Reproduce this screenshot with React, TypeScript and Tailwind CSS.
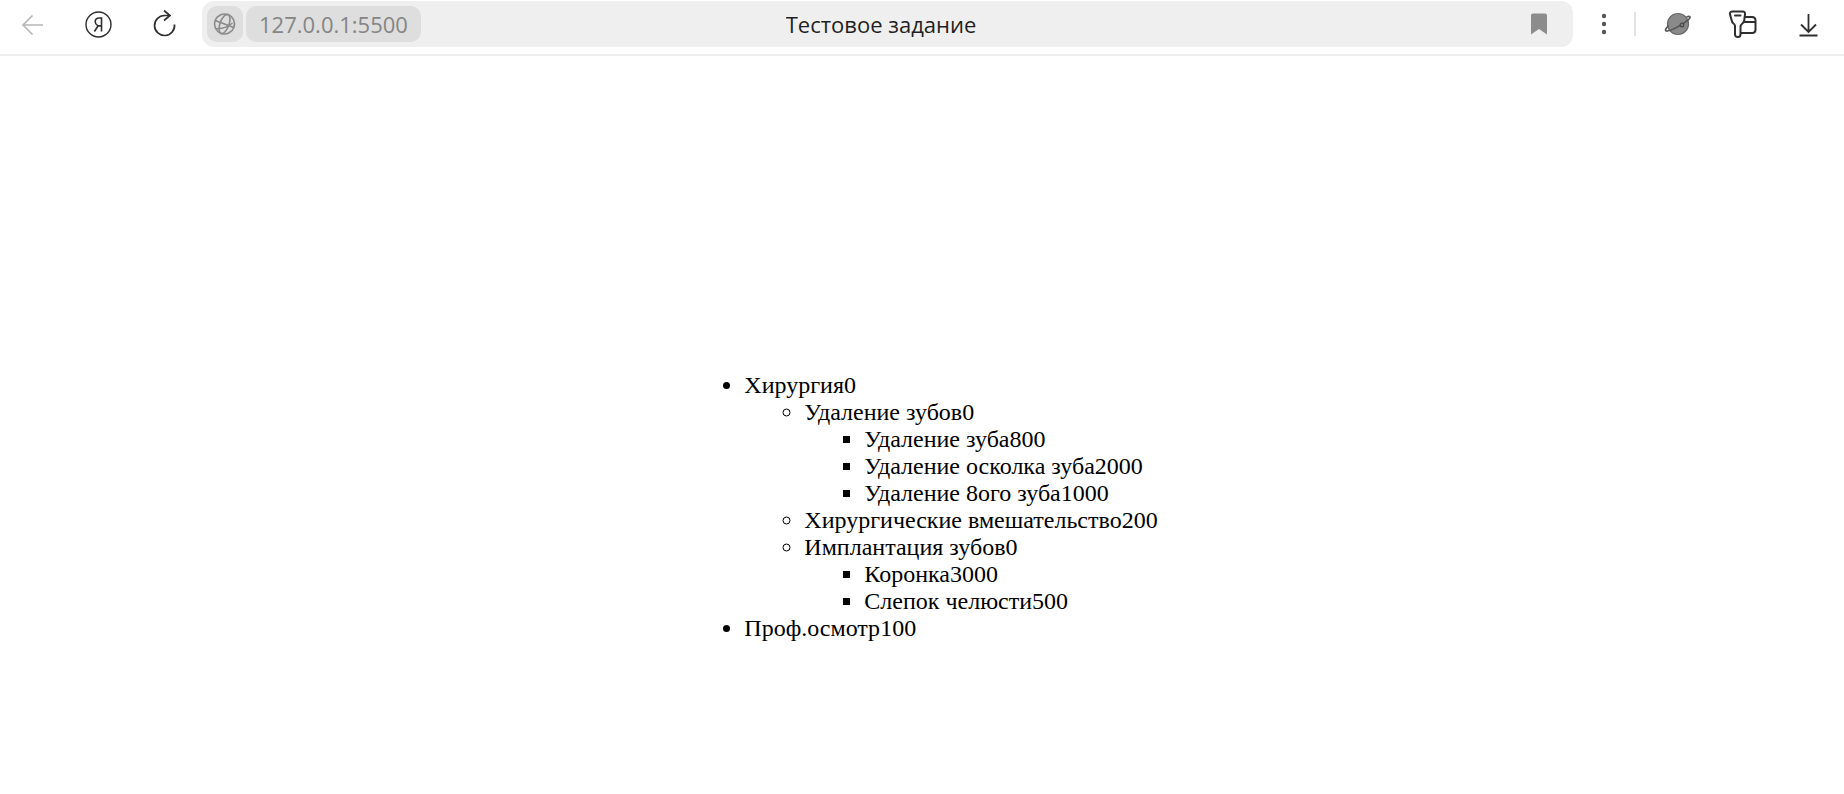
import type { ReactNode } from 'react';

type Service = { name: string; price: number; children?: Service[] };

const services: Service[] = [
  {
    name: 'Хирургия',
    price: 0,
    children: [
      {
        name: 'Удаление зубов',
        price: 0,
        children: [
          { name: 'Удаление зуба', price: 800 },
          { name: 'Удаление осколка зуба', price: 2000 },
          { name: 'Удаление 8ого зуба', price: 1000 },
        ],
      },
      { name: 'Хирургические вмешательство', price: 200 },
      {
        name: 'Имплантация зубов',
        price: 0,
        children: [
          { name: 'Коронка', price: 3000 },
          { name: 'Слепок челюсти', price: 500 },
        ],
      },
    ],
  },
  { name: 'Проф.осмотр', price: 100 },
];

const markers = ['list-disc', 'list-[circle]', 'list-[square]'];

function ServiceList({ items, level = 0 }: { items: Service[]; level?: number }) {
  return (
    <ul className={`pl-[60px] ${markers[level]}`}>
      {items.map((item) => (
        <li key={item.name}>
          {item.name}
          {item.price}
          {item.children && <ServiceList items={item.children} level={level + 1} />}
        </li>
      ))}
    </ul>
  );
}

function IconButton({ label, disabled, children }: { label: string; disabled?: boolean; children: ReactNode }) {
  return (
    <button
      type="button"
      aria-label={label}
      disabled={disabled}
      className="flex size-8 shrink-0 items-center justify-center text-[#2e2e2e] disabled:text-[#b5b5b5]"
    >
      {children}
    </button>
  );
}

const line = { fill: 'none', stroke: 'currentColor', strokeWidth: 2 } as const;

export default function App() {
  return (
    <div className="flex min-h-screen flex-col bg-white">
      <header className="flex h-14 items-start border-b-2 border-[#f0f0f0] pl-4 pr-5 pt-px font-['Open_Sans',sans-serif]">
        <nav className="flex h-[46px] items-center gap-[34px]">
          <IconButton label="Назад" disabled>
            <svg viewBox="0 0 32 32" className="size-8" {...line} strokeWidth={1.6}>
              <path d="M27 17H7M16.500 7.500 7 17l9.500 9.500" />
            </svg>
          </IconButton>
          <IconButton label="Яндекс">
            <svg viewBox="0 0 32 32" className="size-8" {...line} strokeWidth={1.4}>
              <circle cx="16.500" cy="16.500" r="12.500" />
              <path strokeWidth="1.600" d="M19.500 23.500V10h-2.300c-2.600 0-4 1.400-4 3.700 0 2 1 3.100 2.800 4.200l-3.600 5.600M16 17.900h3.500" />
            </svg>
          </IconButton>
          <IconButton label="Обновить">
            <svg viewBox="0 0 32 32" className="size-8" {...line}>
              <path d="M26.500 16.500A10 10 0 1 1 16.500 7.500H22M16 2.500l6 5-6 5" strokeWidth="1.700" />
            </svg>
          </IconButton>
        </nav>

        <div className="ml-[22px] flex h-[46px] min-w-0 flex-1 items-center gap-1 rounded-xl bg-[#efefef] pl-[5px] pr-[18px]">
          <div className="flex flex-1 items-center gap-[3px]">
            <button type="button" aria-label="Сведения о сайте" className="flex size-9 items-center justify-center rounded-[10px] bg-[#dedede] text-[#8a8a8a]">
              <svg viewBox="0 0 36 36" className="size-9" {...line} strokeWidth={1.6}>
                <g transform="rotate(20 17.500 18)">
                  <circle cx="17.500" cy="18" r="10" />
                  <ellipse cx="17.500" cy="18" rx="4.500" ry="10" />
                  <path d="M7.500 18h20" />
                </g>
                <path d="M9 22.500c6 .500 12-1.500 16.500-5.500" strokeWidth="1.300" />
              </svg>
            </button>
            <button type="button" className="flex h-9 items-center rounded-[10px] bg-[#dedede] px-[13px] text-[22px] text-[#858585]">
              127.0.0.1:5500
            </button>
          </div>
          <h1 className="truncate text-[22px] text-[#1f1f1f]">Тестовое задание</h1>
          <div className="flex flex-1 justify-end">
            <button type="button" aria-label="В закладки" className="flex size-8 items-center justify-center text-[#8c8c8c]">
              <svg viewBox="0 0 32 32" className="size-8" fill="currentColor">
                <path d="M8 7.500a2 2 0 0 1 2-2h12a2 2 0 0 1 2 2V26.500l-8-5.500-8 5.500Z" />
              </svg>
            </button>
          </div>
        </div>

        <div className="ml-[15px] flex h-[46px] items-center">
          <IconButton label="Меню">
            <svg viewBox="0 0 32 32" className="size-8" fill="#555">
              <circle cx="16" cy="8" r="2.200" />
              <circle cx="16" cy="16" r="2.200" />
              <circle cx="16" cy="24" r="2.200" />
            </svg>
          </IconButton>
          <div className="ml-3.5 mr-[26px] h-6 w-0.5 bg-[#e2e2e2]" />
          <div className="flex items-center gap-[33px]">
            <IconButton label="Расширение">
              <svg viewBox="0 0 32 32" className="size-8">
                <circle cx="16" cy="16" r="10.500" fill="#8a8a8a" stroke="#666" strokeWidth="1.200" />
                <path d="M6.500 17.500c-3.500 3.500-4 6-1 5.500C11.500 22 24 14.500 27.500 10.500c1.500-2.200-.500-2.500-3-1.500" fill="none" stroke="#555" strokeWidth="1.700" />
                <circle cx="20" cy="17" r="1.800" fill="#8a8a8a" stroke="#4d4d4d" strokeWidth="1.400" />
              </svg>
            </IconButton>
            <IconButton label="Пароли и карты">
              <svg viewBox="0 0 32 32" className="size-8" {...line} strokeLinejoin="round" strokeLinecap="round">
                <path d="M5.500 3.500h10q2.800 0 2.500 2.800l-.800 6.200q-.300 2-1.800 3T13.500 18v8.500Q13.500 29 10.800 29T8 26.500V18q0-1.500-1.500-2.500t-1.800-3L3 6.300Q2.700 3.500 5.500 3.500ZM8 7.500h5.500M18.500 9H25q3.500 0 3.500 3.500v9Q28.500 25 25 25H14M18 14h10" />
              </svg>
            </IconButton>
            <IconButton label="Загрузки">
              <svg viewBox="0 0 32 32" className="size-8" {...line} strokeWidth={1.8}>
                <path d="M16.500 6v18M9 16.500l7.500 7.500 7.500-7.500M7.500 27.500h18" />
              </svg>
            </IconButton>
          </div>
        </div>
      </header>

      <main className="flex justify-center pr-0.5 pt-[316px] font-['Liberation_Serif',serif] text-2xl/[27px] text-black">
        <ServiceList items={services} />
      </main>
    </div>
  );
}
